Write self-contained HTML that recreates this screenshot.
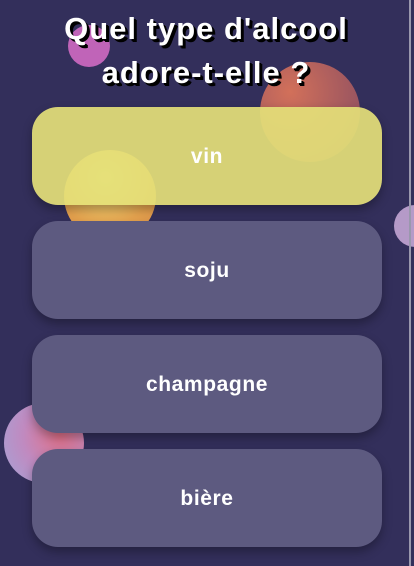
<!DOCTYPE html>
<html><head><style>
html,body{margin:0;padding:0}
body{width:414px;height:566px;background:#332f5b;position:relative;overflow:hidden;font-family:"Liberation Sans",sans-serif}
.b{position:absolute;border-radius:50%}
.t{position:absolute;left:0;width:412px;text-align:center;color:#fff;font-weight:bold;font-size:31px;line-height:44px;top:7px;text-shadow:2px 2px 0 #000,3px 3px 0 #000;letter-spacing:1px}
.btn{position:absolute;left:32px;width:350px;height:98px;border-radius:26px;background:#5d5a80;color:#fff;font-size:21px;font-weight:bold;letter-spacing:0.6px;text-align:center;line-height:100px;box-shadow:0 5px 10px rgba(0,0,0,.3)}
.line{position:absolute;right:3px;top:0;width:2px;height:566px;background:#9a98ad}
</style></head><body>
<div class="b" style="left:68px;top:25px;width:42px;height:42px;background:#c064b8"></div>
<div class="b" style="left:260px;top:62px;width:100px;height:100px;background:radial-gradient(circle at 30% 30%,#d2705a,#9a5560 70%,#6a4565)"></div>
<div class="b" style="left:64px;top:150px;width:92px;height:92px;background:radial-gradient(circle at 45% 30%,#f5e880,#e7a44f 60%,#d88a48)"></div>
<div class="b" style="left:394px;top:205px;width:42px;height:42px;background:#b59ac8"></div>
<div class="b" style="left:4px;top:403px;width:80px;height:80px;background:radial-gradient(circle at 70% 40%,#e07088,#c08ac0 50%,#a4a4d8)"></div>
<div class="line"></div>
<div class="t">Quel type d'alcool<br>adore-t-elle ?</div>
<div class="btn" style="top:107px;background:rgba(228,224,120,0.92)">vin</div>
<div class="btn" style="top:221px">soju</div>
<div class="btn" style="top:335px">champagne</div>
<div class="btn" style="top:449px">bière</div>
</body></html>
